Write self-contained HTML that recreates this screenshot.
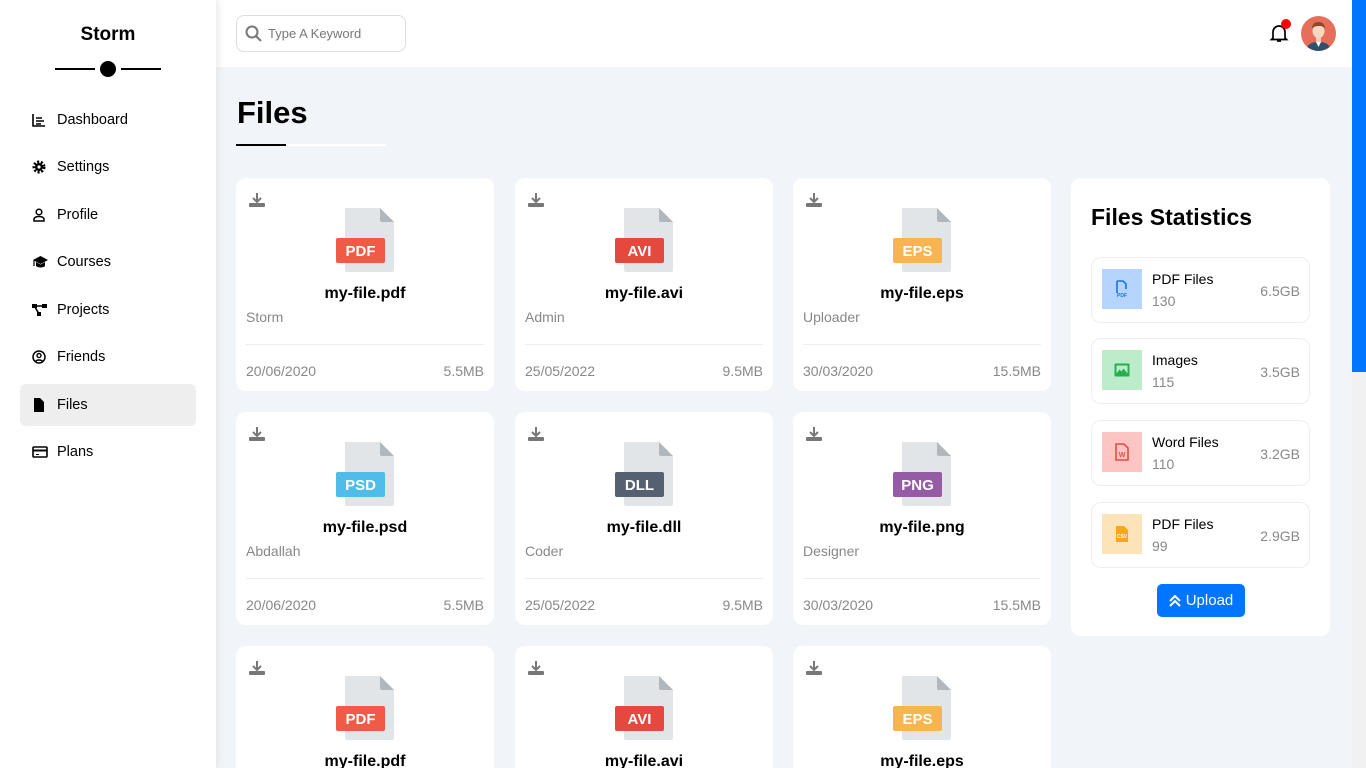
<!DOCTYPE html>
<html style="height:768px;overflow:hidden"><head><meta charset="utf-8"><style>
*{box-sizing:border-box;margin:0;padding:0}
body{width:1366px;height:768px;overflow:hidden;background:#f1f5f9;font-family:"Liberation Sans","DejaVu Sans",sans-serif;position:relative;color:#000}
.side{position:absolute;left:0;top:0;width:216px;height:768px;background:#fff;box-shadow:0 0 10px #ddd;z-index:2}
.logo{position:absolute;left:0;width:216px;top:24px;text-align:center;font-weight:bold;font-size:19px}
.nav{position:absolute;left:20px;width:176px;height:42px;font-size:14.5px;display:flex;align-items:center;border-radius:6px}
.nav svg{position:absolute;left:12px}
.nav span{position:absolute;left:37px;top:13px}
.nav.act{background:#eee}
.top{position:absolute;left:216px;top:0;width:1136px;height:67px;background:#fff}
.search{position:absolute;left:20px;top:15px;width:170px;height:37px;border:1px solid #ddd;border-radius:8px;font-size:13px;color:#777}
.sb{position:absolute;left:1352px;top:0;width:14px;height:768px;background:#f1f1f1}
.sb div{width:14px;height:372px;background:#0075ff}
h1{position:absolute;left:237px;top:95px;font-size:31px;font-weight:bold}
.card{position:absolute;width:258px;height:213px;background:#fff;border-radius:10px}
.card.last{height:122px;border-radius:10px 10px 0 0}
.card .dl{position:absolute;left:12px;top:14px}
.card .doc{position:absolute;left:100px;top:29px}
.card .nm{position:absolute;left:0;width:100%;top:107px;text-align:center;font-weight:bold;font-size:16px}
.card .by{position:absolute;left:10px;top:131px;color:#888;font-size:14px}
.card .ln{position:absolute;left:10px;right:10px;top:166px;border-top:1px solid #eee}
.card .ft{position:absolute;left:10px;right:10px;top:185px;color:#888;font-size:14px;display:flex;justify-content:space-between}
.stats{position:absolute;left:1071px;top:178px;width:259px;height:458px;background:#fff;border-radius:10px}
.stats h2{position:absolute;left:20px;top:26px;font-size:23px}
.it{position:absolute;left:20px;width:219px;height:66px;border:1px solid #eee;border-radius:10px}
.it .ic{position:absolute;left:10px;top:11px;width:40px;height:40px;display:flex;align-items:center;justify-content:center}
.it .t{position:absolute;left:60px;top:13px;font-size:14px}
.it .c{position:absolute;left:60px;top:35px;font-size:14px;color:#888}
.it .s{position:absolute;right:9px;top:25px;font-size:14px;color:#888}
.up{position:absolute;left:86px;top:406px;width:88px;height:33px;background:#0075ff;border-radius:5px;color:#fff;font-size:15px;display:flex;align-items:center;justify-content:center;gap:5px}
</style></head><body>
<div class="side">
<div class="logo">Storm</div>
<div style="position:absolute;left:55px;top:68px;width:40px;height:2px;background:#000"></div>
<div style="position:absolute;left:100px;top:61px;width:16px;height:16px;border-radius:50%;background:#000"></div>
<div style="position:absolute;left:121px;top:68px;width:40px;height:2px;background:#000"></div>

<div class="nav" style="top:99px"><svg width="14" height="14" viewBox="0 0 14 14"><path d="M1 1v12h12M4 5h6M4 8h8M4 11h5" stroke="#000" stroke-width="1.6" fill="none"/></svg><span>Dashboard</span></div>
<div class="nav" style="top:146px"><svg width="14" height="14" viewBox="0 0 14 14"><circle cx="7" cy="7" r="5" fill="none" stroke="#000" stroke-width="3" stroke-dasharray="2 1.6"/><circle cx="7" cy="7" r="4" fill="#000"/><circle cx="7" cy="7" r="1.6" fill="#fff"/></svg><span>Settings</span></div>
<div class="nav" style="top:194px"><svg width="14" height="14" viewBox="0 0 14 14"><circle cx="7" cy="4" r="2.8" fill="none" stroke="#000" stroke-width="1.5"/><path d="M2 13v-1.5C2 9.5 4 8.5 7 8.5s5 1 5 3V13z" fill="none" stroke="#000" stroke-width="1.5"/></svg><span>Profile</span></div>
<div class="nav" style="top:241px"><svg width="17" height="14" viewBox="0 0 17 14"><path d="M8.5 1L1 5l7.5 4L16 5z" fill="#000"/><path d="M4 7v4c2 2 7 2 9 0V7l-4.5 2.5z" fill="#000"/><path d="M2 5v6" stroke="#000" stroke-width="1.2"/></svg><span>Courses</span></div>
<div class="nav" style="top:289px"><svg width="15" height="14" viewBox="0 0 15 14"><rect x="0" y="1" width="5" height="4" fill="#000"/><rect x="10" y="1" width="5" height="4" fill="#000"/><rect x="5" y="9" width="4" height="4" fill="#000"/><path d="M3 4l4 7M5 3h6" stroke="#000" stroke-width="1.6"/></svg><span>Projects</span></div>
<div class="nav" style="top:336px"><svg width="14" height="14" viewBox="0 0 14 14"><circle cx="7" cy="7" r="6" fill="none" stroke="#000" stroke-width="1.5"/><circle cx="7" cy="5.5" r="2" fill="none" stroke="#000" stroke-width="1.4"/><path d="M3.5 11.5c1-2 6-2 7 0" stroke="#000" stroke-width="1.4" fill="none"/></svg><span>Friends</span></div>
<div class="nav act" style="top:384px"><svg width="14" height="14" viewBox="0 0 14 14"><path d="M2 0h6l4 4v10H2z" fill="#000"/></svg><span>Files</span></div>
<div class="nav" style="top:431px"><svg width="16" height="14" viewBox="0 0 16 14"><rect x="1" y="2" width="14" height="10" rx="1" fill="none" stroke="#000" stroke-width="1.6"/><path d="M1 5.5h14" stroke="#000" stroke-width="2"/><path d="M4 9.5h3" stroke="#000" stroke-width="1"/></svg><span>Plans</span></div>
</div>

<div class="top">
<div class="search"><svg style="position:absolute;left:8px;top:9px" width="17" height="17" viewBox="0 0 17 17"><circle cx="7" cy="7" r="5.5" fill="none" stroke="#777" stroke-width="2"/><path d="M11 11l5 5" stroke="#777" stroke-width="2"/></svg><span style="position:absolute;left:31px;top:10px">Type A Keyword</span></div>
<svg style="position:absolute;left:1053px;top:23px" width="20" height="20" viewBox="0 0 20 20"><path d="M4 15V9a6 6 0 0 1 12 0v6l1.5 1.5h-15z" fill="none" stroke="#000" stroke-width="1.7"/><path d="M8 18h4" stroke="#000" stroke-width="1.7"/></svg>
<div style="position:absolute;left:1065px;top:19px;width:10px;height:10px;border-radius:50%;background:#f00"></div>
<svg style="position:absolute;left:1085px;top:16px" width="35" height="35" viewBox="0 0 35 35"><clipPath id="c"><circle cx="17.5" cy="17.5" r="17.5"/></clipPath><g clip-path="url(#c)"><rect width="35" height="35" fill="#e76e5b"/><path d="M5 35c1-7 6-9 12.5-9S29 28 30 35z" fill="#2f4f6b"/><path d="M15 26l2.5 5 2.5-5z" fill="#fff"/><rect x="15" y="20" width="5" height="6" fill="#f2cdb5"/><ellipse cx="17.5" cy="15" rx="6" ry="7" fill="#f7d7c2"/><path d="M11 13c0-6 4-7 6.5-7S24 7 24 13c-2-3-4-3-6.5-3S12 11 11 13z" fill="#8b4a2b"/></g></svg>
</div>
<div class="sb"><div></div></div>

<h1>Files</h1>
<div style="position:absolute;left:236px;top:144px;width:150px;height:2px;background:#fff"></div>
<div style="position:absolute;left:236px;top:144px;width:50px;height:2px;background:#000"></div>

<div class="card" style="left:236px;top:178px"><svg class="dl" width="18" height="16" viewBox="0 0 18 16"><path d="M9 1v8M5 6l4 4 4-4" stroke="#777" stroke-width="2" fill="none"/><rect x="1" y="11" width="16" height="4" rx="1" fill="#777"/></svg><svg class="doc" width="60" height="66" viewBox="0 0 60 66"><path d="M9 1h35l14 14v48a2 2 0 0 1-2 2H11a2 2 0 0 1-2-2z" fill="#e2e5e7"/><path d="M44 1v12a2 2 0 0 0 2 2h12z" fill="#b0b7bd"/><rect x="0" y="31" width="49" height="25" rx="2" fill="#f05a46"/><text x="24.5" y="49" text-anchor="middle" fill="#fff" font-size="15" font-family="Liberation Sans" font-weight="bold">PDF</text></svg><div class="nm">my-file.pdf</div><div class="by">Storm</div><div class="ln"></div><div class="ft"><span>20/06/2020</span><span>5.5MB</span></div></div>

<div class="card" style="left:515px;top:178px"><svg class="dl" width="18" height="16" viewBox="0 0 18 16"><path d="M9 1v8M5 6l4 4 4-4" stroke="#777" stroke-width="2" fill="none"/><rect x="1" y="11" width="16" height="4" rx="1" fill="#777"/></svg><svg class="doc" width="60" height="66" viewBox="0 0 60 66"><path d="M9 1h35l14 14v48a2 2 0 0 1-2 2H11a2 2 0 0 1-2-2z" fill="#e2e5e7"/><path d="M44 1v12a2 2 0 0 0 2 2h12z" fill="#b0b7bd"/><rect x="0" y="31" width="49" height="25" rx="2" fill="#e5483d"/><text x="24.5" y="49" text-anchor="middle" fill="#fff" font-size="15" font-family="Liberation Sans" font-weight="bold">AVI</text></svg><div class="nm">my-file.avi</div><div class="by">Admin</div><div class="ln"></div><div class="ft"><span>25/05/2022</span><span>9.5MB</span></div></div>

<div class="card" style="left:793px;top:178px"><svg class="dl" width="18" height="16" viewBox="0 0 18 16"><path d="M9 1v8M5 6l4 4 4-4" stroke="#777" stroke-width="2" fill="none"/><rect x="1" y="11" width="16" height="4" rx="1" fill="#777"/></svg><svg class="doc" width="60" height="66" viewBox="0 0 60 66"><path d="M9 1h35l14 14v48a2 2 0 0 1-2 2H11a2 2 0 0 1-2-2z" fill="#e2e5e7"/><path d="M44 1v12a2 2 0 0 0 2 2h12z" fill="#b0b7bd"/><rect x="0" y="31" width="49" height="25" rx="2" fill="#f7b550"/><text x="24.5" y="49" text-anchor="middle" fill="#fff" font-size="15" font-family="Liberation Sans" font-weight="bold">EPS</text></svg><div class="nm">my-file.eps</div><div class="by">Uploader</div><div class="ln"></div><div class="ft"><span>30/03/2020</span><span>15.5MB</span></div></div>

<div class="card" style="left:236px;top:412px"><svg class="dl" width="18" height="16" viewBox="0 0 18 16"><path d="M9 1v8M5 6l4 4 4-4" stroke="#777" stroke-width="2" fill="none"/><rect x="1" y="11" width="16" height="4" rx="1" fill="#777"/></svg><svg class="doc" width="60" height="66" viewBox="0 0 60 66"><path d="M9 1h35l14 14v48a2 2 0 0 1-2 2H11a2 2 0 0 1-2-2z" fill="#e2e5e7"/><path d="M44 1v12a2 2 0 0 0 2 2h12z" fill="#b0b7bd"/><rect x="0" y="31" width="49" height="25" rx="2" fill="#50bde8"/><text x="24.5" y="49" text-anchor="middle" fill="#fff" font-size="15" font-family="Liberation Sans" font-weight="bold">PSD</text></svg><div class="nm">my-file.psd</div><div class="by">Abdallah</div><div class="ln"></div><div class="ft"><span>20/06/2020</span><span>5.5MB</span></div></div>

<div class="card" style="left:515px;top:412px"><svg class="dl" width="18" height="16" viewBox="0 0 18 16"><path d="M9 1v8M5 6l4 4 4-4" stroke="#777" stroke-width="2" fill="none"/><rect x="1" y="11" width="16" height="4" rx="1" fill="#777"/></svg><svg class="doc" width="60" height="66" viewBox="0 0 60 66"><path d="M9 1h35l14 14v48a2 2 0 0 1-2 2H11a2 2 0 0 1-2-2z" fill="#e2e5e7"/><path d="M44 1v12a2 2 0 0 0 2 2h12z" fill="#b0b7bd"/><rect x="0" y="31" width="49" height="25" rx="2" fill="#556170"/><text x="24.5" y="49" text-anchor="middle" fill="#fff" font-size="15" font-family="Liberation Sans" font-weight="bold">DLL</text></svg><div class="nm">my-file.dll</div><div class="by">Coder</div><div class="ln"></div><div class="ft"><span>25/05/2022</span><span>9.5MB</span></div></div>

<div class="card" style="left:793px;top:412px"><svg class="dl" width="18" height="16" viewBox="0 0 18 16"><path d="M9 1v8M5 6l4 4 4-4" stroke="#777" stroke-width="2" fill="none"/><rect x="1" y="11" width="16" height="4" rx="1" fill="#777"/></svg><svg class="doc" width="60" height="66" viewBox="0 0 60 66"><path d="M9 1h35l14 14v48a2 2 0 0 1-2 2H11a2 2 0 0 1-2-2z" fill="#e2e5e7"/><path d="M44 1v12a2 2 0 0 0 2 2h12z" fill="#b0b7bd"/><rect x="0" y="31" width="49" height="25" rx="2" fill="#955ba5"/><text x="24.5" y="49" text-anchor="middle" fill="#fff" font-size="15" font-family="Liberation Sans" font-weight="bold">PNG</text></svg><div class="nm">my-file.png</div><div class="by">Designer</div><div class="ln"></div><div class="ft"><span>30/03/2020</span><span>15.5MB</span></div></div>

<div class="card last" style="left:236px;top:646px"><svg class="dl" width="18" height="16" viewBox="0 0 18 16"><path d="M9 1v8M5 6l4 4 4-4" stroke="#777" stroke-width="2" fill="none"/><rect x="1" y="11" width="16" height="4" rx="1" fill="#777"/></svg><svg class="doc" width="60" height="66" viewBox="0 0 60 66"><path d="M9 1h35l14 14v48a2 2 0 0 1-2 2H11a2 2 0 0 1-2-2z" fill="#e2e5e7"/><path d="M44 1v12a2 2 0 0 0 2 2h12z" fill="#b0b7bd"/><rect x="0" y="31" width="49" height="25" rx="2" fill="#f05a46"/><text x="24.5" y="49" text-anchor="middle" fill="#fff" font-size="15" font-family="Liberation Sans" font-weight="bold">PDF</text></svg><div class="nm">my-file.pdf</div></div>

<div class="card last" style="left:515px;top:646px"><svg class="dl" width="18" height="16" viewBox="0 0 18 16"><path d="M9 1v8M5 6l4 4 4-4" stroke="#777" stroke-width="2" fill="none"/><rect x="1" y="11" width="16" height="4" rx="1" fill="#777"/></svg><svg class="doc" width="60" height="66" viewBox="0 0 60 66"><path d="M9 1h35l14 14v48a2 2 0 0 1-2 2H11a2 2 0 0 1-2-2z" fill="#e2e5e7"/><path d="M44 1v12a2 2 0 0 0 2 2h12z" fill="#b0b7bd"/><rect x="0" y="31" width="49" height="25" rx="2" fill="#e5483d"/><text x="24.5" y="49" text-anchor="middle" fill="#fff" font-size="15" font-family="Liberation Sans" font-weight="bold">AVI</text></svg><div class="nm">my-file.avi</div></div>

<div class="card last" style="left:793px;top:646px"><svg class="dl" width="18" height="16" viewBox="0 0 18 16"><path d="M9 1v8M5 6l4 4 4-4" stroke="#777" stroke-width="2" fill="none"/><rect x="1" y="11" width="16" height="4" rx="1" fill="#777"/></svg><svg class="doc" width="60" height="66" viewBox="0 0 60 66"><path d="M9 1h35l14 14v48a2 2 0 0 1-2 2H11a2 2 0 0 1-2-2z" fill="#e2e5e7"/><path d="M44 1v12a2 2 0 0 0 2 2h12z" fill="#b0b7bd"/><rect x="0" y="31" width="49" height="25" rx="2" fill="#f7b550"/><text x="24.5" y="49" text-anchor="middle" fill="#fff" font-size="15" font-family="Liberation Sans" font-weight="bold">EPS</text></svg><div class="nm">my-file.eps</div></div>

<div class="stats">
<h2>Files Statistics</h2>
<div class="it" style="top:79px"><div class="ic" style="background:#b5d5fe"><svg width="14" height="18" viewBox="0 0 14 18"><path d="M2 1h6l3 3v5" stroke="#1a73e8" stroke-width="1.6" fill="none"/><path d="M2 1v12" stroke="#1a73e8" stroke-width="1.6"/><text x="7" y="17" font-size="5" fill="#1a73e8" text-anchor="middle" font-weight="bold">PDF</text></svg></div><div class="t">PDF Files</div><div class="c">130</div><div class="s">6.5GB</div></div>
<div class="it" style="top:160px"><div class="ic" style="background:#bdeccb"><svg width="16" height="14" viewBox="0 0 16 14"><rect x="0.5" y="0.5" width="15" height="13" rx="1" fill="#22b14c"/><rect x="2.5" y="2.5" width="11" height="8" fill="#bdeccb"/><path d="M2.5 10.5l3-4 2 2 2-3 4 5z" fill="#22b14c"/></svg></div><div class="t">Images</div><div class="c">115</div><div class="s">3.5GB</div></div>
<div class="it" style="top:242px"><div class="ic" style="background:#fcc5c3"><svg width="14" height="18" viewBox="0 0 14 18"><path d="M1 1h8l4 4v12H1z" fill="none" stroke="#e74c3c" stroke-width="1.6"/><text x="7" y="14" font-size="7" fill="#e74c3c" text-anchor="middle" font-weight="bold">W</text></svg></div><div class="t">Word Files</div><div class="c">110</div><div class="s">3.2GB</div></div>
<div class="it" style="top:324px"><div class="ic" style="background:#fde4b8"><svg width="14" height="18" viewBox="0 0 14 18"><path d="M1 1h8l4 4v12H1z" fill="#f5a623"/><text x="7" y="13" font-size="5" fill="#fff" text-anchor="middle" font-weight="bold">CSV</text></svg></div><div class="t">PDF Files</div><div class="c">99</div><div class="s">2.9GB</div></div>
<div class="up"><svg width="12" height="12" viewBox="0 0 12 12"><path d="M1 6l5-5 5 5M1 11l5-5 5 5" stroke="#fff" stroke-width="2" fill="none"/></svg>Upload</div>
</div>
</body></html>
